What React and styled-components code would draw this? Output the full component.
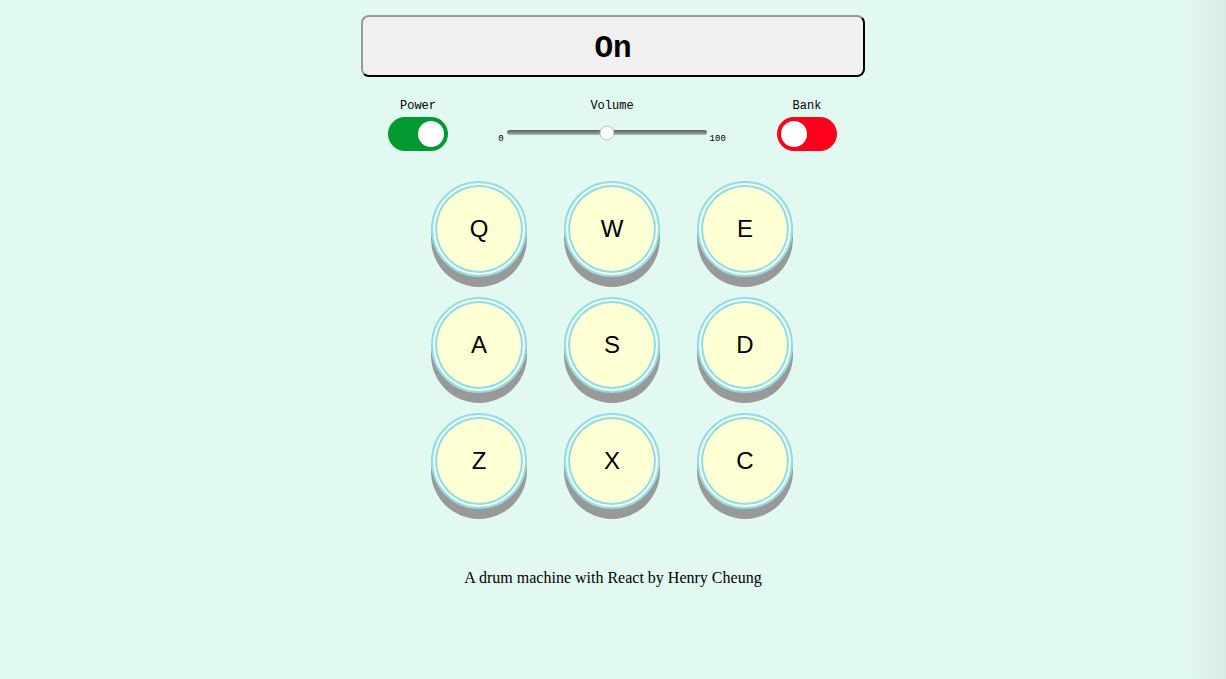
import React from "react";
import styled, { createGlobalStyle } from "styled-components";

const Global = createGlobalStyle`
  html, body { margin: 0; padding: 0; }
  body {
    min-height: 679px;
    background: linear-gradient(to right, #e2f9f1 0, #e2f9f1 calc(100% - 40px), #d6ece5 100%);
    font-family: "Liberation Serif", serif;
  }
`;

const Machine = styled.div`
  width: 504px;
  margin: 0 auto;
  padding-top: 15px;
  display: flex;
  flex-direction: column;
  align-items: stretch;
`;

const Display = styled.div`
  height: 58px;
  box-sizing: content-box;
  border: 2px solid;
  border-color: #9a9a9a #000 #000 #9a9a9a;
  border-radius: 8px;
  background: #f0f0f0;
  display: flex;
  align-items: center;
  justify-content: center;
  font-family: "Liberation Mono", "Courier New", monospace;
  font-weight: bold;
  font-size: 31px;
  line-height: 1;
  color: #000;
  & > span { transform: translateY(2px); }
`;

const Controls = styled.div`
  display: grid;
  grid-template-columns: 114px 1fr 116px;
  margin-top: 22px;
  align-items: start;
`;

const Group = styled.div`
  display: flex;
  flex-direction: column;
  align-items: center;
`;

const Label = styled.div`
  font-family: "Liberation Mono", "Courier New", monospace;
  font-size: 12px;
  line-height: 14px;
  color: #000;
  margin-bottom: ${(p) => p.$gap}px;
`;

const Toggle = styled.div`
  width: 60px;
  height: 34px;
  border-radius: 17px;
  background: ${(p) => p.$color};
  display: flex;
  align-items: center;
  justify-content: ${(p) => (p.$on ? "flex-end" : "flex-start")};
  padding: 0 4px;
  box-sizing: border-box;
`;

const Knob = styled.div`
  width: 26px;
  height: 26px;
  border-radius: 50%;
  background: #fff;
`;

const SliderRow = styled.div`
  display: flex;
  align-items: flex-end;
  gap: 3px;
`;

const Tick = styled.span`
  font-family: "Liberation Mono", "Courier New", monospace;
  font-size: 9px;
  line-height: 10px;
  color: #000;
`;

const Track = styled.div`
  position: relative;
  width: 200px;
  height: 5px;
  border-radius: 3px;
  margin-bottom: 9px;
  background: linear-gradient(to bottom, #5c6460 0%, #7d8580 50%, #b5bcb8 100%);
`;

const Thumb = styled.div`
  position: absolute;
  top: 50%;
  width: 13px;
  height: 13px;
  border-radius: 50%;
  background: #fff;
  border: 1px solid #bbb;
  transform: translate(-50%, -50%);
`;

const Pads = styled.div`
  margin: 30px 0 0 70px;
  display: grid;
  grid-template-columns: repeat(3, 96px);
  column-gap: 37px;
  row-gap: 20px;
`;

const Pad = styled.button`
  width: 96px;
  height: 96px;
  border-radius: 50%;
  border: 2px solid #8bdcf5;
  background: #ffffd4;
  box-shadow: inset 0 0 0 2px #ffffd4, inset 0 0 0 4px #8bdcf5, 0 10px 0 #999;
  font-family: "Liberation Sans", Arial, sans-serif;
  font-size: 24px;
  color: #000;
  display: flex;
  align-items: center;
  justify-content: center;
  padding: 0;
  cursor: pointer;
`;

const Footer = styled.p`
  margin: 60px 0 0;
  text-align: center;
  font-family: "Liberation Serif", "Times New Roman", serif;
  font-size: 16px;
  color: #000;
`;

const keys = ["Q", "W", "E", "A", "S", "D", "Z", "X", "C"];

export default function App() {
  const volume = 50;
  return (
    <>
      <Global />
      <Machine>
        <Display>
          <span>On</span>
        </Display>
        <Controls>
          <Group>
            <Label $gap={4}>Power</Label>
            <Toggle $on $color="#009a30">
              <Knob />
            </Toggle>
          </Group>
          <Group>
            <Label $gap={17}>Volume</Label>
            <SliderRow>
              <Tick>0</Tick>
              <Track>
                <Thumb style={{ left: `${volume}%` }} />
              </Track>
              <Tick>100</Tick>
            </SliderRow>
          </Group>
          <Group>
            <Label $gap={4}>Bank</Label>
            <Toggle $color="#ff001c">
              <Knob />
            </Toggle>
          </Group>
        </Controls>
        <Pads>
          {keys.map((k) => (
            <Pad key={k}>{k}</Pad>
          ))}
        </Pads>
        <Footer>A drum machine with React by Henry Cheung</Footer>
      </Machine>
    </>
  );
}
